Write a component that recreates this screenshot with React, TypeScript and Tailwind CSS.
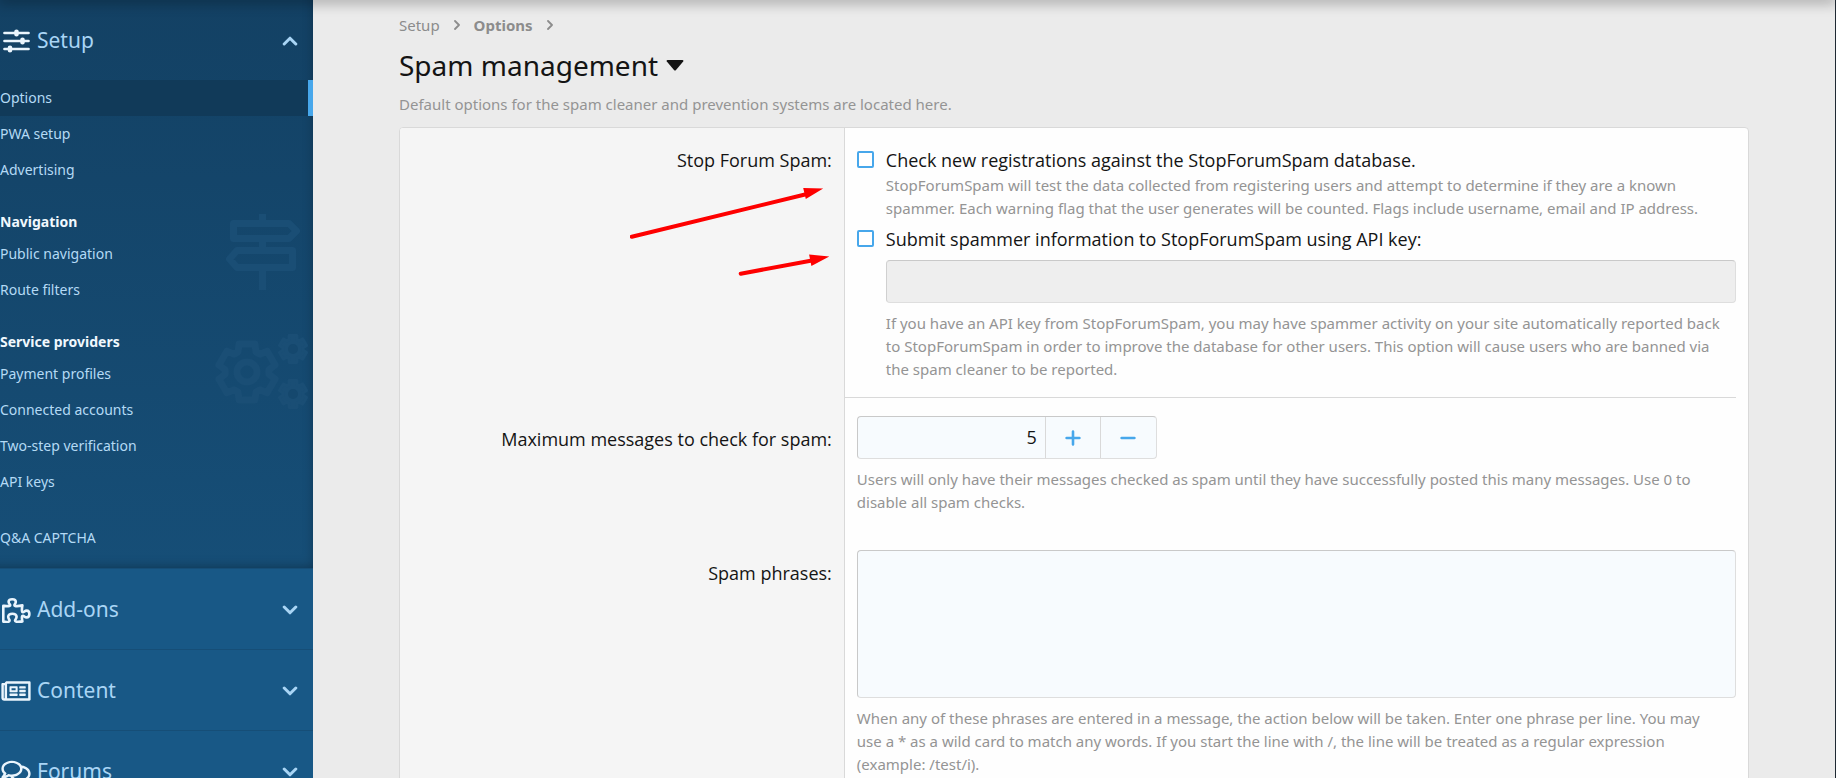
import { useState, type ReactNode } from 'react'
import { FaRegComments, FaRegNewspaper } from 'react-icons/fa'

type NavGroup = { title?: string; watermark?: ReactNode; links: string[] }

// outline of a cog with six teeth
const gearPath = (cx: number, cy: number, outer: number, inner: number) => {
  const pts: string[] = []
  for (let i = 0; i < 6; i++) {
    const base = -90 + i * 60
    const steps: [number, number][] = [[-24, inner], [-16, outer], [16, outer], [24, inner]]
    steps.forEach(([deg, r]) => {
      const a = ((base + deg) * Math.PI) / 180
      pts.push(`${(cx + r * Math.cos(a)).toFixed(2)} ${(cy + r * Math.sin(a)).toFixed(2)}`)
    })
  }
  return `M${pts.join('L')}Z`
}

const SlidersIcon = () => (
  <svg viewBox="0 0 30 26" className="h-[26px] w-[30px]" fill="none" stroke="currentColor" strokeLinecap="round">
    <path d="M3.5 5H27.5M3.5 13H27.5M3.5 21H27.5" strokeWidth="2.7" />
    <path d="M15.5 3.7V6.3M21.5 11.7V14.3M9 19.7V22.3" strokeWidth="4.6" />
  </svg>
)

const PuzzleIcon = () => (
  <svg viewBox="0 0 30 26" className="h-[26px] w-[30px]" fill="none" stroke="currentColor" strokeWidth="2.6" strokeLinejoin="round">
    <path d="M2.3 8.8C5 9 9.2 9.6 9.2 8.2C9.2 7.2 7.6 6.6 7.6 4.8C7.6 3.1 9 2.2 11.2 2.2C13.4 2.2 14.8 3.1 14.8 4.8C14.8 6.6 13.4 7.2 13.4 8.2C13.4 9.8 18 9 21.4 8.4C20.9 11.5 20.4 15.3 22 15.3C23.2 15.3 23.6 13.6 25.6 13.6C27.4 13.6 28.4 15 28.4 17C28.4 19 27.4 20.4 25.6 20.4C23.6 20.4 23.2 18.8 22 18.8C20.4 18.8 20.9 22 21.4 24.4C18.6 24.9 14 25.4 14 23.6C14 22.4 15.6 21.8 15.6 19.8C15.6 18 14 16.8 11.4 16.8C8.8 16.8 7.2 18 7.2 19.8C7.2 21.8 8.6 22.4 8.6 23.6C8.6 25.4 5 25 2.3 24.6Z" />
  </svg>
)

const Chevron = ({ open }: { open: boolean }) => (
  <svg viewBox="0 0 16 10" className="h-[10px] w-4" fill="none" stroke="currentColor" strokeWidth="3" strokeLinecap="round" strokeLinejoin="round">
    <path d={open ? 'M2.2 8L8 2.2L13.8 8' : 'M2.2 2L8 7.8L13.8 2'} />
  </svg>
)

const SignsWatermark = () => (
  <svg viewBox="0 0 76 76" className="h-[76px] w-[76px]" fill="none" stroke="currentColor" strokeWidth="7" strokeLinejoin="round">
    <path d="M8.5 9.5H64L71.5 17L64 24.5H8.5ZM67.5 36.5H12L4.5 45L12 53.5H67.5ZM37.5 0V6M37.5 28V33M37.5 57V76" />
  </svg>
)

const CogsWatermark = () => (
  <svg viewBox="0 0 95 76" className="h-[76px] w-[95px]" fill="none" stroke="currentColor" strokeLinejoin="round">
    <path d={gearPath(32, 38, 29, 22)} strokeWidth="7" />
    <circle cx="32" cy="38" r="10" strokeWidth="7" />
    <path d={gearPath(78, 15, 14, 10)} fill="currentColor" strokeWidth="3" />
    <path d={gearPath(78, 60, 14, 10)} fill="currentColor" strokeWidth="3" />
    <circle cx="78" cy="15" r="5" className="fill-[#15486e] stroke-none" />
    <circle cx="78" cy="60" r="5" className="fill-[#15486e] stroke-none" />
  </svg>
)

const groups: NavGroup[] = [
  { links: ['Options', 'PWA setup', 'Advertising'] },
  { title: 'Navigation', watermark: <SignsWatermark />, links: ['Public navigation', 'Route filters'] },
  {
    title: 'Service providers',
    watermark: <CogsWatermark />,
    links: ['Payment profiles', 'Connected accounts', 'Two-step verification', 'API keys'],
  },
  { links: ['Q&A CAPTCHA'] },
]

const sections = [
  { label: 'Add-ons', icon: <PuzzleIcon /> },
  { label: 'Content', icon: <FaRegNewspaper className="h-[26px] w-[30px]" /> },
  { label: 'Forums', icon: <FaRegComments className="h-[26px] w-[30px]" /> },
]

function SectionButton({ icon, label, open = false }: { icon: ReactNode; label: string; open?: boolean }) {
  return (
    <button type="button" aria-expanded={open} className="flex h-20 w-full items-center pt-[2px] pr-[15px] pl-px text-[21px] text-[#a9d5f5]">
      <span className="mr-[6px] text-[#eaf5fd]">{icon}</span>
      <span className="flex-1 text-left">{label}</span>
      <Chevron open={open} />
    </button>
  )
}

function Sidebar() {
  return (
    <aside className="w-[313px] shrink-0 bg-[#185886]">
      <div className="bg-linear-to-b from-[#134164] to-[#164e77] shadow-[inset_-6px_-8px_12px_-8px_rgba(0,0,0,0.35)]">
        <SectionButton icon={<SlidersIcon />} label="Setup" open />
        <nav className="flex flex-col gap-5 pb-3">
          {groups.map((group, i) => (
            <div key={i} className="relative">
              {group.watermark && (
                <div className={`absolute text-[#1a4e75] ${i === 1 ? 'top-[6px] right-3' : 'top-[6px] right-[3px]'}`}>
                  {group.watermark}
                </div>
              )}
              {group.title && (
                <h3 className="relative h-7 text-[14px] leading-7 font-bold text-[#f0f8fe]">{group.title}</h3>
              )}
              {group.links.map((link) => (
                <a
                  key={link}
                  href="#"
                  className={
                    link === 'Options'
                      ? 'relative block h-9 border-r-[5px] border-[#47a7eb] bg-[#113a59] text-[14px] leading-9 text-[#b4daf5]'
                      : 'relative block h-9 text-[14px] leading-9 text-[#b4daf5]'
                  }
                >
                  {link}
                </a>
              ))}
            </div>
          ))}
        </nav>
      </div>
      {sections.map((s) => (
        <div key={s.label} className="border-t border-[#164e77]">
          <SectionButton icon={s.icon} label={s.label} />
        </div>
      ))}
    </aside>
  )
}

function Row({ label, htmlFor, children }: { label: string; htmlFor?: string; children: ReactNode }) {
  return (
    <div className="flex">
      <div className={`w-[33%] shrink-0 border-r border-[#d9d9d9] bg-[#f5f5f5] pr-3 text-right leading-6 ${htmlFor ? 'pt-[29px]' : 'pt-5'}`}>
        <label htmlFor={htmlFor}>{label}</label>
      </div>
      <div className="min-w-0 flex-1">{children}</div>
    </div>
  )
}

const Hint = ({ children }: { children: ReactNode }) => (
  <p className="font-['Noto_Sans','Open_Sans',sans-serif] text-[15px] leading-[23px] text-[#949494]">{children}</p>
)

const CrumbArrow = () => (
  <svg viewBox="0 0 6 10" className="h-[10px] w-[6px]" fill="none" stroke="currentColor" strokeWidth="1.8" strokeLinecap="round" strokeLinejoin="round">
    <path d="M1 1L5 5L1 9" />
  </svg>
)

const checkboxClass = 'mt-[3px] size-[17px] shrink-0 appearance-none rounded-[2px] border-2 border-[#47a7eb] bg-white'

export default function App() {
  const [limit, setLimit] = useState(5)

  return (
    <div className="relative flex h-screen overflow-hidden border-r border-[#1f2933] bg-[#ebebeb] font-['Noto_Sans','Open_Sans',sans-serif] text-[18px] text-[#141414]">
      {/* shadow cast by the header scrolled out above */}
      <div className="pointer-events-none absolute inset-x-0 -top-1 z-10 h-1 shadow-[0_0_14px_2px_rgba(0,0,0,0.4)]" />

      <Sidebar />

      <main className="min-w-0 flex-1 px-[86px] pt-[13px]">
        <nav className="flex items-center text-[15px] leading-6 text-[#8c8c8c]">
          <a href="#">Setup</a>
          <span className="mx-[14px]"><CrumbArrow /></span>
          <a href="#" className="font-bold">Options</a>
          <span className="mx-[14px]"><CrumbArrow /></span>
        </nav>
        <h1 className="mt-2 flex items-center text-[28px] leading-10">
          <button type="button" className="flex items-center gap-2">
            Spam management
            <svg viewBox="0 0 18 11" className="h-[11px] w-[18px]" fill="currentColor">
              <path d="M1.5 0H16.5Q18 .4 17.2 1.6L10 10Q9 11 8 10L.8 1.6Q0 .4 1.5 0Z" />
            </svg>
          </button>
        </h1>
        <p className="mt-[7px] mb-[11px] text-[15px] leading-6 text-[#949494]">
          Default options for the spam cleaner and prevention systems are located here.
        </p>

        <form className="relative overflow-hidden rounded border border-[#d9d9d9] bg-[#fefefe] font-['Open_Sans','Noto_Sans',sans-serif]">
          <Row label="Stop Forum Spam:">
            <div className="mr-3 border-b border-[#d9d9d9] pt-5 pb-4 pl-3">
              <div className="flex gap-3">
                <input id="sfs-check" type="checkbox" className={checkboxClass} />
                <div className="min-w-0 flex-1">
                  <label htmlFor="sfs-check" className="mb-[2px] block leading-6">
                    Check new registrations against the StopForumSpam database.
                  </label>
                  <Hint>
                    StopForumSpam will test the data collected from registering users and attempt to determine if they are a known
                    spammer. Each warning flag that the user generates will be counted. Flags include username, email and IP address.
                  </Hint>
                </div>
              </div>
              <div className="mt-[7px] flex gap-3">
                <input id="sfs-submit" type="checkbox" className={checkboxClass} />
                <div className="min-w-0 flex-1">
                  <label htmlFor="sfs-submit" className="block leading-6">
                    Submit spammer information to StopForumSpam using API key:
                  </label>
                  <input
                    type="text"
                    aria-label="API key"
                    disabled
                    className="my-[9px] block h-[43px] w-full rounded border border-[#dedede] border-t-[#c9c9c9] border-l-[#d0d0d0] bg-[#eeeeee] px-2"
                  />
                  <Hint>
                    If you have an API key from StopForumSpam, you may have spammer activity on your site automatically reported back
                    <br />
                    to StopForumSpam in order to improve the database for other users. This option will cause users who are banned via
                    <br />
                    the spam cleaner to be reported.
                  </Hint>
                </div>
              </div>
            </div>
          </Row>

          <Row label="Maximum messages to check for spam:" htmlFor="max-messages">
            <div className="px-3 pt-[18px] pb-[18px]">
              <div className="mb-[9px] flex h-[43px] w-[300px] overflow-hidden rounded border border-[#dedede] border-t-[#c9c9c9] border-l-[#c9c9c9] bg-[#f7fbfe] text-[#47a7eb]">
                <input
                  id="max-messages"
                  type="text"
                  inputMode="numeric"
                  value={limit}
                  onChange={(e) => setLimit(Number(e.target.value) || 0)}
                  className="min-w-0 flex-1 px-2 text-right text-[#141414] outline-none"
                />
                <button type="button" aria-label="Increase" onClick={() => setLimit(limit + 1)} className="flex w-[55px] items-center justify-center border-l border-[#d9d9d9]">
                  <svg viewBox="0 0 16 16" className="size-4" stroke="currentColor" strokeWidth="2.6" strokeLinecap="round">
                    <path d="M8 1.6V14.4M1.6 8H14.4" />
                  </svg>
                </button>
                <button type="button" aria-label="Decrease" onClick={() => setLimit(Math.max(0, limit - 1))} className="flex w-14 items-center justify-center border-l border-[#d9d9d9]">
                  <svg viewBox="0 0 16 16" className="size-4" stroke="currentColor" strokeWidth="2.6" strokeLinecap="round">
                    <path d="M1.6 8H14.4" />
                  </svg>
                </button>
              </div>
              <Hint>
                Users will only have their messages checked as spam until they have successfully posted this many messages. Use 0 to
                <br />
                disable all spam checks.
              </Hint>
            </div>
          </Row>

          <Row label="Spam phrases:" htmlFor="phrases">
            <div className="px-3 pt-[18px] pb-5">
              <textarea
                id="phrases"
                className="mb-[9px] block h-[148px] w-full resize-none rounded border border-[#dedede] border-t-[#c9c9c9] border-l-[#c9c9c9] bg-[#f7fbfe] p-2 outline-none"
              />
              <Hint>
                When any of these phrases are entered in a message, the action below will be taken. Enter one phrase per line. You may
                <br />
                use a * as a wild card to match any words. If you start the line with /, the line will be treated as a regular expression
                <br />
                (example: /test/i).
              </Hint>
            </div>
          </Row>

          {/* pointers to the two check boxes */}
          <svg viewBox="0 0 200 90" className="pointer-events-none absolute top-[58px] left-[230px] h-[90px] w-[200px]" fill="#fe0000" stroke="#fe0000">
            <path d="M1.8 50.7L175 8.5M110.7 87.7L182 74.5" strokeWidth="4" strokeLinecap="round" />
            <path d="M173.2 1.9L193.2 2.4L175.8 13.1ZM179.1 68.5L199.3 70.4L181.4 80Z" stroke="none" />
          </svg>
        </form>
      </main>
    </div>
  )
}
